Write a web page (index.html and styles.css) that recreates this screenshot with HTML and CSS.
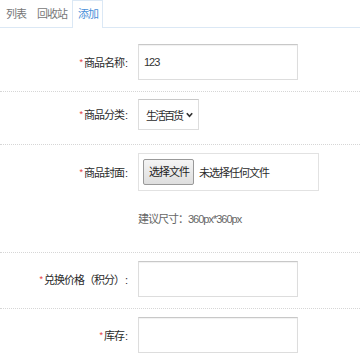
FILE: index.html
```html
<!DOCTYPE html>
<html lang="zh-CN">
<head>
<meta charset="UTF-8">
<meta name="viewport" content="width=device-width, initial-scale=1.0">
<link rel="stylesheet" href="styles.css">
<title>添加商品</title>
</head>
<body>
<div class="tabs">
<a class="tab">列表</a>
<a class="tab">回收站</a>
<a class="tab is-active">添加</a>
</div>
<form class="form">
<div class="row">
<label class="label"><i class="req">*</i>商品名称<span class="colon">:</span></label>
<div class="field"><input class="input" type="text" value="123"></div>
</div>
<div class="row row-select">
<label class="label"><i class="req">*</i>商品分类<span class="colon">:</span></label>
<div class="field">
<div class="select">
<span class="select-text">生活百货</span>
<svg class="chevron" width="7" height="6" viewBox="0 0 7 6"><path d="M0.8 1.2 L3.5 4.2 L6.2 1.2" fill="none" stroke="#333" stroke-width="1.7"/></svg>
</div>
</div>
</div>
<div class="row row-file">
<label class="label"><i class="req">*</i>商品封面<span class="colon">:</span></label>
<div class="field">
<div class="file">
<span class="file-btn">选择文件</span>
<span class="file-name">未选择任何文件</span>
</div>
<p class="hint">建议尺寸：360px*360px</p>
</div>
</div>
<div class="row">
<label class="label"><i class="req">*</i>兑换价格（积分）<span class="colon">:</span></label>
<div class="field"><input class="input" type="text"></div>
</div>
<div class="row">
<label class="label"><i class="req">*</i>库存<span class="colon">:</span></label>
<div class="field"><input class="input" type="text"></div>
</div>
</form>
</body>
</html>
```
FILE: styles.css
```css
html,
body {
margin: 0;
background: #fff;
overflow: hidden;
}
body {
font-family: "Liberation Sans", "Noto Sans CJK SC", sans-serif;
font-size: 11px;
letter-spacing: -1px;
color: #2b2b2b;
}
.tabs {
display: flex;
height: 27px;
border-bottom: 1px solid #dbe8f5;
}
.tab {
padding: 0 4px 0 5px;
border: 1px solid transparent;
border-bottom: none;
line-height: 26px;
color: #777;
}
.tab.is-active {
border-color: #dbe8f5;
background: #fff;
margin-bottom: -1px;
height: 27px;
color: #4a90d9;
}
.form {
margin: 0;
padding-top: 8px;
}
.row {
display: flex;
align-items: flex-start;
padding: 8px 0 10px;
border-bottom: 1px dotted #d6d6d6;
}
.label {
width: 127px;
padding-right: 11px;
text-align: right;
line-height: 36px;
white-space: nowrap;
}
.colon {
margin-left: 1px;
}
.req {
font-style: normal;
color: #e4393c;
font-size: 9px;
letter-spacing: 0;
vertical-align: 2px;
margin-right: 1px;
}
.field {
flex: 1;
}
.input {
display: block;
box-sizing: border-box;
width: 160px;
height: 36px;
margin: 0;
padding: 0 5px;
border: 1px solid #ddd;
border-top-color: #c8c8c8;
box-shadow: inset 0 1px 1px rgba(0, 0, 0, 0.06);
font: inherit;
letter-spacing: -1px;
color: #333;
outline: none;
}
.row-select {
padding-top: 7px;
padding-bottom: 13px;
}
.row-select .label {
line-height: 31px;
}
.select {
display: flex;
align-items: center;
justify-content: space-between;
box-sizing: border-box;
width: 61px;
height: 31px;
padding: 0 5px 0 7px;
border: 1px solid #ddd;
border-top-color: #c8c8c8;
white-space: nowrap;
}
.select-text {
letter-spacing: -2px;
}
.chevron {
display: block;
flex: none;
}
.row-file {
padding-bottom: 25px;
}
.row-file .label {
line-height: 38px;
}
.file {
display: flex;
align-items: center;
box-sizing: border-box;
width: 181px;
height: 38px;
padding: 0 4px;
border: 1px solid #e2e2e2;
white-space: nowrap;
}
.file-btn {
box-sizing: border-box;
height: 26px;
padding: 0 4px 0 5px;
line-height: 24px;
border: 1px solid #999;
border-radius: 2px;
background: linear-gradient(to bottom, #f4f4f4 0%, #dedede 100%);
color: #222;
}
.file-name {
margin-left: 5px;
}
.hint {
margin: 20px 0 0;
line-height: 16px;
color: #666;
}
```
